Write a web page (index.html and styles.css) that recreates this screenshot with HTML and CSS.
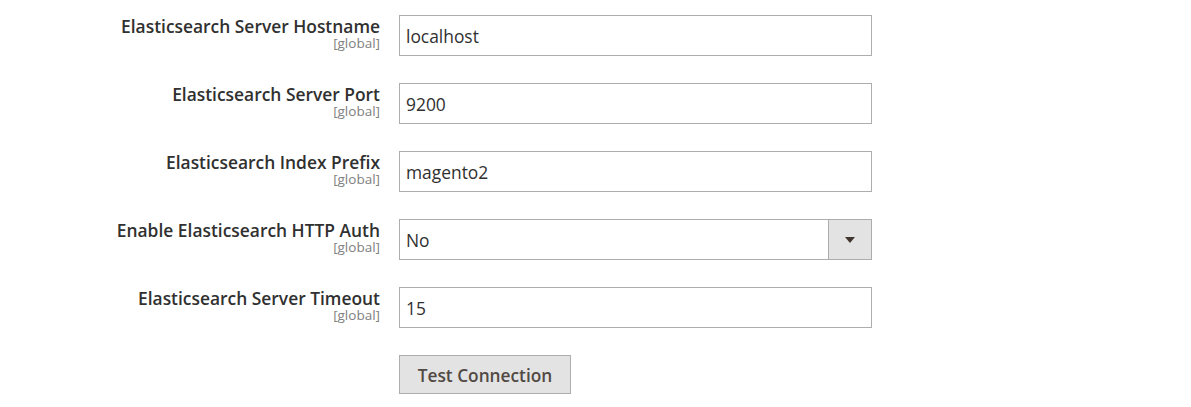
FILE: index.html
```html
<!DOCTYPE html>
<html>
<head>
<meta charset="utf-8">
<link rel="stylesheet" href="styles.css">
</head>
<body>
<div class="form">
  <div class="row">
    <div class="label"><span class="title">Elasticsearch Server Hostname</span><span class="scope">[global]</span></div>
    <div class="control"><div class="input">localhost</div></div>
  </div>
  <div class="row">
    <div class="label"><span class="title">Elasticsearch Server Port</span><span class="scope">[global]</span></div>
    <div class="control"><div class="input">9200</div></div>
  </div>
  <div class="row">
    <div class="label"><span class="title">Elasticsearch Index Prefix</span><span class="scope">[global]</span></div>
    <div class="control"><div class="input">magento2</div></div>
  </div>
  <div class="row">
    <div class="label"><span class="title">Enable Elasticsearch HTTP Auth</span><span class="scope">[global]</span></div>
    <div class="control"><div class="input select"><span class="val">No</span><span class="arrow"><svg width="10" height="6" viewBox="0 0 10 6"><path d="M0 0H10L5 6Z" fill="#41362f"/></svg></span></div></div>
  </div>
  <div class="row">
    <div class="label"><span class="title">Elasticsearch Server Timeout</span><span class="scope">[global]</span></div>
    <div class="control"><div class="input">15</div></div>
  </div>
  <div class="row">
    <div class="label"></div>
    <div class="control"><div class="button">Test Connection</div></div>
  </div>
</div>
</body>
</html>
```
FILE: styles.css
```css
html, body { margin: 0; padding: 0; background: #fff; }
body { font-family: "Open Sans", "Liberation Sans", sans-serif; color: #303030; }
.form { display: flex; flex-direction: column; gap: 27px; padding-top: 15px; }
.row { display: flex; align-items: flex-start; }
.label { width: 380px; display: flex; flex-direction: column; align-items: flex-end; padding-top: 1px; }
.title { font-size: 17.4px; font-weight: 600; line-height: 20px; color: #303030; }
.scope { font-size: 13.5px; line-height: 14px; color: #808080; }
.control { margin-left: 19px; }
.input { box-sizing: border-box; width: 473px; height: 41px; border: 1px solid #adadad; display: flex; align-items: center; padding-left: 6px; font-size: 17.4px; color: #303030; }
.select { justify-content: space-between; padding-right: 0; }
.arrow { width: 43px; height: 39px; box-sizing: border-box; background: #e3e3e3; border-left: 1px solid #adadad; display: flex; align-items: center; justify-content: center; }
.button { box-sizing: border-box; width: 172px; height: 39px; border: 1px solid #adadad; background: #e3e3e3; color: #514943; font-size: 17.3px; font-weight: 600; display: flex; align-items: center; justify-content: center; padding-top: 2px; }
```
